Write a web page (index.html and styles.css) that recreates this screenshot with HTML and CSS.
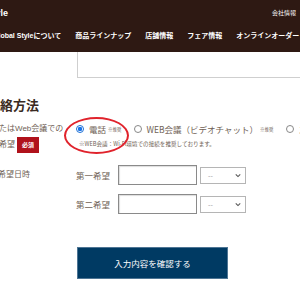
FILE: index.html
```html
<!DOCTYPE html>
<html lang="ja">
<head>
    <meta charset="UTF-8">
    <meta name="viewport" content="width=device-width, initial-scale=1.0">
    <title>お問い合わせ</title>
    <link rel="stylesheet" href="styles.css">
</head>
<body>

    <header class="site-header">
        <div class="header-top">
            <div class="logo-box"><span class="logo">Global Style</span></div>
            <a class="company-link">会社情報</a>
        </div>
        <nav class="global-nav">
            <a>Global Styleについて</a>
            <a>商品ラインナップ</a>
            <a>店舗情報</a>
            <a>フェア情報</a>
            <a>オンラインオーダー</a>
        </nav>
    </header>

    <main class="content">
        <div class="msg-box"></div>

        <h2 class="section-title">連絡方法</h2>

        <!-- contact method -->
        <div class="form-row contact-row">
            <div class="row-label">
                またはWeb会議での<br>
                ご希望<span class="required">必須</span>
            </div>
            <div class="row-field">
                <div class="radio-line">
                    <label class="radio-item">
                        <span class="radio checked"></span>電話<small>※推奨</small>
                    </label>
                    <label class="radio-item">
                        <span class="radio"></span>WEB会議（ビデオチャット）<small>※推奨</small>
                    </label>
                    <label class="radio-item">
                        <span class="radio"></span>ス
                    </label>
                </div>
                <p class="note">※WEB会議：Wi-Fi環境での接続を推奨しております。</p>
                <div class="mark"></div>
            </div>
        </div>

        <!-- preferred date -->
        <div class="form-row date-row">
            <div class="row-label date-title">ご希望日時</div>
            <div class="row-field">
                <div class="date-line">
                    <span class="date-label">第一希望</span>
                    <div class="date-input"></div>
                    <div class="time-select">--<svg viewBox="0 0 8 6" width="6" height="5"><path d="M1 1.5 L4 4.5 L7 1.5" fill="none" stroke="#555" stroke-width="1.4"/></svg></div>
                </div>
                <div class="date-line">
                    <span class="date-label">第二希望</span>
                    <div class="date-input"></div>
                    <div class="time-select">--<svg viewBox="0 0 8 6" width="6" height="5"><path d="M1 1.5 L4 4.5 L7 1.5" fill="none" stroke="#555" stroke-width="1.4"/></svg></div>
                </div>
            </div>
        </div>

        <div class="form-row">
            <div></div>
            <div class="row-field">
                <button class="confirm-btn">入力内容を確認する</button>
            </div>
        </div>
    </main>

</body>
</html>
```

FILE: styles.css
```css
/* General */
body {
    margin: 0;
    font-family: "Noto Sans CJK JP", "Noto Sans", sans-serif;
    color: #6f5f55;
    background: #fff;
    overflow: hidden;
}

a {
    color: #fff;
    text-decoration: none;
}

/* Header */
.site-header {
    height: 52px;
    background: #2e1913;
}

.header-top {
    height: 25px;
    display: flex;
    align-items: center;
    justify-content: space-between;
}

.logo-box {
    width: 8px;
    display: flex;
    justify-content: flex-end;
    white-space: nowrap;
}

.logo {
    color: #fff;
    font-family: "Liberation Sans", sans-serif;
    font-weight: bold;
    font-size: 9px;
}

.company-link {
    font-size: 6px;
    margin-right: 4px;
}

.global-nav {
    display: flex;
    gap: 14px;
    white-space: nowrap;
    margin-left: -7px;
    height: 20px;
    align-items: center;
}

.global-nav a {
    font-family: "Liberation Sans", "Noto Sans CJK JP", sans-serif;
    font-size: 7px;
    font-weight: bold;
}

/* Content */
.content {
    margin-left: -13px;
}

.msg-box {
    margin-left: 90px;
    width: 300px;
    height: 25px;
    border: 1px solid #cfcfcf;
    border-top: none;
}

.section-title {
    margin: 19px 0 8px;
    font-size: 13px;
    line-height: 16px;
    color: #3a2a22;
}

.form-row {
    display: grid;
    grid-template-columns: 88px 1fr;
}

.row-label {
    padding-left: 4px;
    font-family: "Liberation Sans", "Noto Sans CJK JP", sans-serif;
    font-size: 8px;
    line-height: 16px;
    white-space: nowrap;
}

.required {
    display: inline-block;
    margin-left: 2px;
    width: 22px;
    height: 16px;
    line-height: 16px;
    text-align: center;
    background: #b0121b;
    color: #fff;
    font-size: 6px;
    font-weight: bold;
    vertical-align: top;
}

.row-field {
    position: relative;
}

/* Radios */
.radio-line {
    display: flex;
    gap: 12px;
    white-space: nowrap;
    height: 16px;
    align-items: center;
    font-size: 8.5px;
    margin-left: 1px;
}

.radio-item {
    display: flex;
    align-items: center;
}

.radio-item small {
    font-size: 4.5px;
    margin-left: 2px;
}

.radio {
    width: 8px;
    height: 8px;
    border: 1px solid #888;
    border-radius: 50%;
    margin-right: 5px;
    box-sizing: border-box;
}

.radio.checked {
    border-color: #1a6fd6;
    background: radial-gradient(circle, #1a73e8 0 2px, #fff 2.4px);
}

.note {
    margin: 0;
    font-size: 5.6px;
    line-height: 14px;
    padding-left: 4px;
    white-space: nowrap;
}

/* red annotation circle */
.mark {
    position: absolute;
    left: -11px;
    top: -4px;
    width: 61px;
    height: 33px;
    border: 2px solid #e0232c;
    border-radius: 50%;
}

/* Date rows */
.date-row {
    margin-top: 12px;
}

.date-row .row-label {
    line-height: 20px;
}

.date-title {
    padding-left: 3px;
}

.date-line {
    display: flex;
    align-items: center;
    margin-bottom: 9px;
}

.date-label {
    font-size: 8.5px;
    width: 42px;
    padding-left: 1px;
}

.date-input {
    width: 77px;
    height: 18px;
    border: 1px solid #8a8a8a;
    box-shadow: inset 1px 1px 1px #ddd;
}

.time-select {
    margin-left: 3px;
    width: 46px;
    height: 17px;
    border: 1px solid #b5b5b5;
    display: flex;
    align-items: center;
    justify-content: space-between;
    padding: 0 4px 0 7px;
    box-sizing: border-box;
    font-size: 7px;
    color: #999;
}

/* Button */
.confirm-btn {
    margin-top: 24px;
    margin-left: 2px;
    width: 151px;
    height: 32px;
    border: 1px solid #4e7594;
    background: #003a63;
    color: #fff;
    font-family: inherit;
    font-size: 8.5px;
}
```
